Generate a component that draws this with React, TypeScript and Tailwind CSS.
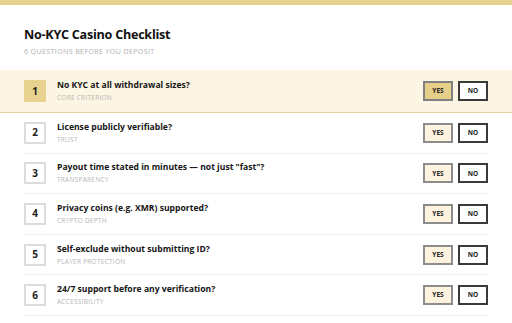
import React from 'react';

type Question = { n: number; text: string; tag: string };

const questions: Question[] = [
    { n: 1, text: 'No KYC at all withdrawal sizes?', tag: 'Core criterion' },
    { n: 2, text: 'License publicly verifiable?', tag: 'Trust' },
    { n: 3, text: 'Payout time stated in minutes \u2014 not just "fast"?', tag: 'Transparency' },
    { n: 4, text: 'Privacy coins (e.g. XMR) supported?', tag: 'Crypto depth' },
    { n: 5, text: 'Self-exclude without submitting ID?', tag: 'Player protection' },
    { n: 6, text: '24/7 support before any verification?', tag: 'Accessibility' },
];

const Row: React.FC<{ q: Question; active?: boolean }> = ({ q, active }) => (
    <div className={active ? 'bg-[#fdf5e3] border-b border-[#e6d3a0] px-6' : 'px-6'}>
        <div className={active ? 'flex items-center h-[42px]' : 'flex items-center h-[40.6px] border-b border-[#efefef]'}>
            <div className={active ? 'w-[22px] h-[22px] flex items-center justify-center bg-[#e8d28f] text-[10px] font-bold text-[#222]' : 'w-[22px] h-[22px] flex items-center justify-center border-2 border-[#dcdcdc] bg-white text-[10px] font-bold text-[#222]'}>
                {q.n}
            </div>
            <div className="ml-[11px] flex-1">
                <div className="text-[8.6px] font-bold text-[#151515] leading-[11px]">{q.text}</div>
                <div className="text-[6.5px] uppercase tracking-[0.04em] text-[#b5b5b5] leading-[9px] mt-[2px]">{q.tag}</div>
            </div>
            <div className="flex gap-[5px]">
                <button className={active ? 'w-[30px] h-[20px] border-2 border-[#808080] bg-[#e6cf8a] text-[6.5px] font-bold text-[#222]' : 'w-[30px] h-[20px] border-2 border-[#8c8c8c] bg-[#fdf3df] text-[6.5px] font-bold text-[#222]'}>
                    YES
                </button>
                <button className="w-[30px] h-[20px] border-2 border-[#3a3a3a] bg-white text-[6.5px] font-bold text-[#222]">
                    NO
                </button>
            </div>
        </div>
    </div>
);

export default function App() {
    return (
        <div className="w-[512px] h-[323px] bg-white overflow-hidden" style={{ fontFamily: '"Open Sans", "Noto Sans", sans-serif' }}>
            <div className="h-[5px] bg-[#e8d28f]" />
            <div className="px-6 pt-[20px] pb-[14px]">
                <h1 className="text-[12.6px] font-bold tracking-[-0.02em] text-[#111] leading-[20px]">No-KYC Casino Checklist</h1>
                <p className="text-[7.1px] uppercase tracking-[0.05em] text-[#b0b0b0] leading-[10px] mt-[1px]">6 Questions before you deposit</p>
            </div>
            {questions.map((q) => (
                <Row key={q.n} q={q} active={q.n === 1} />
            ))}
        </div>
    );
}
